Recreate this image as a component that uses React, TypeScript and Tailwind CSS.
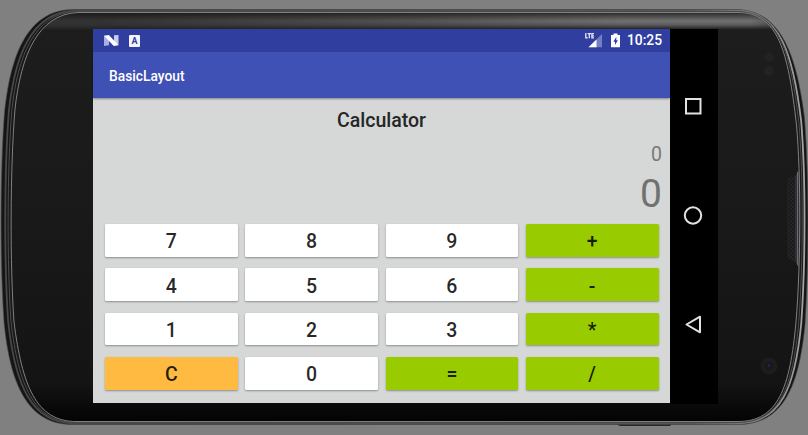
import React from "react";

// Start point, then cubic segments and straight edges, as flat coordinate lists.
const OUTER = [
  [72, 9.5], [738, 9.5],
  [782, 11, 797, 58, 804.5, 118], [809, 175, 809, 262, 805, 325], [799, 385, 784, 424.5, 738, 424.5],
  [72, 424.5],
  [28, 424.5, 10, 385, 4, 322], [0, 265, 0, 170, 4.5, 112], [10, 60, 25, 10.5, 72, 9.5],
];

const INNER = [
  [78, 12.5], [738, 12.5],
  [778, 12.5, 788, 50, 796.5, 125], [801, 175, 801, 262, 796, 322], [790, 388, 778, 421.5, 738, 421.5],
  [76, 421.5],
  [36, 421.5, 22, 385, 14, 322], [10, 265, 10, 170, 15, 109], [21, 55, 38, 14, 78, 12.5],
];

// Outline lying at the fraction t of the way from the outer edge to the glass.
function outline(t: number): string {
  return (
    OUTER.map((seg, i) => {
      const coords = seg.map((v, j) => (v + (INNER[i][j] - v) * t).toFixed(2)).join(" ");
      return (i === 0 ? "M" : seg.length === 2 ? "L" : "C") + coords;
    }).join("") + "Z"
  );
}

function PhoneBody() {
  const face = outline(1);
  return (
    <svg className="absolute inset-0" width="808" height="435" viewBox="0 0 808 435" fill="none">
      <defs>
        <linearGradient id="face" x1="0" y1="0" x2="0" y2="435" gradientUnits="userSpaceOnUse">
          <stop offset="0.03" stopColor="#1c1c1c" />
          <stop offset="0.048" stopColor="#333" />
          <stop offset="0.058" stopColor="#303030" />
          <stop offset="0.07" stopColor="#1d1d1d" />
          <stop offset="0.5" stopColor="#191919" />
          <stop offset="0.88" stopColor="#141414" />
          <stop offset="0.97" stopColor="#030303" />
        </linearGradient>
        <linearGradient id="sheen" x1="0" y1="13" x2="0" y2="29" gradientUnits="userSpaceOnUse">
          <stop offset="0" stopColor="#aaa" stopOpacity="0.12" />
          <stop offset="0.5" stopColor="#aaa" stopOpacity="0.52" />
          <stop offset="0.7" stopColor="#aaa" stopOpacity="0.4" />
          <stop offset="1" stopColor="#aaa" stopOpacity="0" />
        </linearGradient>
        <linearGradient id="fade" x1="100" y1="0" x2="800" y2="0" gradientUnits="userSpaceOnUse">
          <stop offset="0" stopColor="#000" />
          <stop offset="0.45" stopColor="#888" />
          <stop offset="0.75" stopColor="#fff" />
          <stop offset="0.93" stopColor="#fff" />
          <stop offset="1" stopColor="#000" />
        </linearGradient>
        <mask id="sheenMask"><rect width="808" height="40" fill="url(#fade)" /></mask>
        <linearGradient id="ring" x1="0" y1="0" x2="808" y2="0" gradientUnits="userSpaceOnUse">
          <stop offset="0" stopColor="#484848" />
          <stop offset="0.1" stopColor="#464646" />
          <stop offset="0.85" stopColor="#555" />
          <stop offset="0.96" stopColor="#8b8989" />
          <stop offset="1" stopColor="#aaa6a6" />
        </linearGradient>
        <pattern id="grille" width="4" height="4" patternUnits="userSpaceOnUse">
          <rect width="4" height="4" fill="#252525" />
          <circle cx="1" cy="1" r=".8" fill="#0c0c0c" />
          <circle cx="3" cy="3" r=".8" fill="#0c0c0c" />
        </pattern>
        <clipPath id="faceClip"><path d={face} /></clipPath>
      </defs>
      <path d="M616 424h56l-2 2H620z" fill="#282828" />
      <path d={outline(0)} fill="#151515" stroke="#4b4b4b" strokeWidth=".6" />
      <path d={outline(0.42)} stroke="url(#ring)" strokeWidth="1.8" />
      <path d={outline(0.7)} fill="#191919" stroke="#4e4e4e" strokeWidth="1" />
      <path d={face} fill="url(#face)" />
      <g clipPath="url(#faceClip)">
        <path d="M100 13H800V29H100z" fill="url(#sheen)" mask="url(#sheenMask)" />
        <path d="M798 171c-2 6-11 5-11 10v74c0 6 9 5 11 12h4v-96z" fill="url(#grille)" />
        <path d="M798 171l-3 6v82l3 8h3v-96z" fill="#303136" />
        <path d="M797.5 172v93" stroke="#686b73" strokeWidth="1" />
      </g>
      <path d={face} stroke="#8c8c8c" strokeWidth=".9" />
      <circle cx="769" cy="57" r="5" fill="#222" />
      <circle cx="769" cy="71" r="5" fill="#222" />
      <circle cx="769" cy="366" r="8.5" fill="#1d1d1e" />
      <circle cx="769" cy="366" r="4" fill="#181823" />
      <circle cx="769" cy="365.5" r="1.4" fill="#252548" />
    </svg>
  );
}

function StatusBar() {
  return (
    <div className="flex h-[23px] shrink-0 items-center bg-[#303f9f] pl-[11px] pr-[8px] text-white">
      <svg width="15" height="13" viewBox="0 0 15 13">
        <path d="M0 1.5 5 4v7.2L0 12z" fill="#aab1df" />
        <path d="M10 1.2 14.5 1v10.3L10 9z" fill="#c9cdeb" />
        <path d="M0 1.800 4.800 1 14.500 11.300 9.800 12z" fill="#fff" />
      </svg>
      <div className="ml-[10px] flex h-[12px] w-[11px] items-center justify-center rounded-[1px] bg-[#f3f4fc] pt-px text-[9px] leading-none font-bold text-[#303f9f]">A</div>
      <div className="flex-1" />
      <svg width="18" height="15" viewBox="0 0 18 15">
        <path d="M17 1v13.300H3.500z" fill="#747fc0" />
        <path d="M11.500 6.500v7.800H3.500z" fill="#fff" />
        <path d="M.8 0v4.800h2M2.600 .7h3.400M4.300 .7v4.500M9 .7H6.900v4.100H9M6.900 2.800H9" fill="none" stroke="#e6e8f7" strokeWidth="1.300" />
      </svg>
      <svg className="ml-[7px]" width="11" height="15" viewBox="0 0 11 15">
        <path d="M3.500 .5h4V2H10v12.200H1V2h2.500z" fill="#fff" />
        <path d="M6.300 3.800 3.400 8.700H5V12L7.900 7.200H6.300z" fill="#303f9f" />
      </svg>
      <span className="ml-[6px] pt-px text-[13.800px] leading-none font-medium">10:25</span>
    </div>
  );
}

const KEYS = ["7", "8", "9", "+", "4", "5", "6", "-", "1", "2", "3", "*", "C", "0", "=", "/"];

function keyColor(key: string): string {
  if (key === "C") return "bg-[#ffbb41]";
  return /[0-9]/.test(key) ? "bg-white" : "bg-[#99cc00]";
}

function NavigationBar() {
  return (
    <div className="h-[375px] w-[48px] bg-black">
      <svg width="48" height="375" viewBox="0 0 48 375" fill="none" stroke="#e2e2e2" strokeWidth="2">
        <rect x="16" y="70" width="14.500" height="14.500" />
        <circle cx="23" cy="186.500" r="8.200" />
        <path d="M16.500 295.500 30 287.700v15.600z" strokeLinejoin="round" />
      </svg>
    </div>
  );
}

export default function App() {
  return (
    <div className="relative h-[435px] w-[808px] overflow-hidden bg-[#808080] font-['Roboto',sans-serif]">
      <PhoneBody />
      <div className="relative flex items-start pt-[29px] pl-[93px]">
        <div className="flex h-[374px] w-[577px] flex-col bg-[#d6d8d7]">
          <StatusBar />
          <header className="relative flex h-[46px] shrink-0 items-center bg-[#3f51b5] pt-[2px] pl-[16px] text-[13.800px] font-medium text-white shadow-[0_1px_2px_rgba(0,0,0,0.4)]">
            BasicLayout
          </header>
          <h1 className="mt-[10px] text-center text-[19.500px] leading-[25px] font-medium text-[#252626]">Calculator</h1>
          <div className="mt-[10px] pr-[8px] text-right text-[19.500px] leading-[24px] text-[#777878]">0</div>
          <div className="h-[48px] pt-[4px] pr-[8px] text-right text-[39px] leading-[46px] text-[#707171]">0</div>
          <div className="mt-[9px] ml-[12px] grid w-[553.500px] grid-cols-4 gap-x-[7.500px] gap-y-[11.500px]">
            {KEYS.map((key) => (
              <button
                key={key}
                className={`flex h-[32.800px] items-center justify-center rounded-[1.500px] pt-[4px] text-[19.500px] leading-[24px] font-medium text-black/85 shadow-[0_1px_2px_rgba(0,0,0,0.35)] ${keyColor(key)}`}
              >
                {key}
              </button>
            ))}
          </div>
        </div>
        <NavigationBar />
      </div>
    </div>
  );
}
